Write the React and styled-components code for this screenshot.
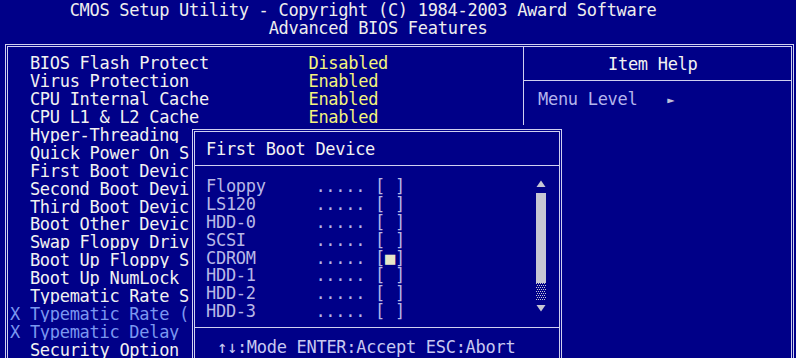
import React from "react";
import styled, { createGlobalStyle } from "styled-components";

const CW = 9.95; // character cell width
const LH = 17.9; // character cell height

const GlobalStyle = createGlobalStyle`
  html, body { margin: 0; padding: 0; background: #000088; }
  body { overflow: hidden; }
`;

const Screen = styled.div`
  position: relative;
  width: 796px;
  height: 358px;
  overflow: hidden;
  background: #000088;
  font-family: "DejaVu Sans Mono", "Liberation Mono", monospace;
  font-size: 17px;
  letter-spacing: -0.29px;
  line-height: 21px;
  color: #eeeeee;
`;

const Header = styled.header`
  display: flex;
  flex-direction: column;
`;

const TextLine = styled.div`
  height: ${LH}px;
  white-space: pre;
  padding-left: ${(p) => (p.$col || 0) * CW}px;
  color: ${(p) => p.$color || "#eeeeee"};
`;

const Frame = styled.div`
  box-sizing: border-box;
  margin: 8px 0 0 5px;
  width: 789px;
  height: 420px;
  border: 3px double #d0d0f0;
  border-bottom: none;
  display: flex;
`;

const LeftPanel = styled.section`
  width: 515px;
  padding-top: 6.7px;
  display: flex;
  flex-direction: column;
`;

const SettingRow = styled.div`
  display: flex;
  height: ${LH}px;
  white-space: pre;
  padding-left: 2px;
`;

const Marker = styled.span`
  width: ${2 * CW}px;
  color: #7b97f0;
`;

const Label = styled.span`
  width: ${28 * CW}px;
  overflow: hidden;
  color: ${(p) => (p.$disabled ? "#7b97f0" : "#f2f2f2")};
`;

const Value = styled.span`
  color: ${(p) => (p.$disabled ? "#7b97f0" : "#f4f47c")};
`;

const RightPanel = styled.aside`
  flex: 1;
  border-left: 1px solid #d0d0f0;
  display: flex;
  flex-direction: column;
`;

const HelpHeader = styled.div`
  padding: 7px 0 8.1px 84px;
  border-bottom: 1px solid #d0d0f0;
  height: ${LH}px;
  color: #f2f2f2;
  white-space: pre;
`;

const HelpLine = styled.div`
  padding: 8.5px 0 0 14px;
  height: ${LH}px;
  color: #b4b4ec;
  white-space: pre;
`;

const Pointer = styled.span`
  font-size: 12px;
  color: #c0c0d8;
  vertical-align: 1px;
`;

/* the popup occupies whole character cells; its box is drawn inside them */
const PopupCell = styled.div`
  position: absolute;
  left: 189px;
  top: 125px;
  padding: 4px 2px 0 3px;
  background: #000088;
`;

const Popup = styled.div`
  width: 370px;
  height: 260px;
  box-sizing: border-box;
  border: 3px double #d0d0f0;
  border-bottom: none;
  display: flex;
  flex-direction: column;
`;

const PopupTitle = styled.div`
  padding: 7px 0 8.1px 11px;
  height: ${LH}px;
  border-bottom: 1px solid #d0d0f0;
  color: #f2f2f2;
  white-space: pre;
`;

const PopupBody = styled.div`
  display: flex;
  padding: 10px 12px 7.7px 11px;
  border-bottom: 1px solid #d0d0f0;
`;

const OptionList = styled.div`
  flex: 1;
  display: flex;
  flex-direction: column;
`;

const OptionRow = styled.div`
  height: ${LH}px;
  white-space: pre;
  color: #b8b8e6;
`;

const Mark = styled.span`
  color: #e6e6c8;
`;

const PopupFooter = styled.div`
  padding: 9px 0 0 22px;
  height: ${LH}px;
  color: #c8c8f0;
  white-space: pre;
`;

const settings = [
  { label: "BIOS Flash Protect", value: "Disabled" },
  { label: "Virus Protection", value: "Enabled" },
  { label: "CPU Internal Cache", value: "Enabled" },
  { label: "CPU L1 & L2 Cache", value: "Enabled" },
  { label: "Hyper-Threading Technology", value: "Enabled" },
  { label: "Quick Power On Self Test", value: "Enabled" },
  { label: "First Boot Device", value: "CDROM" },
  { label: "Second Boot Device", value: "HDD-0" },
  { label: "Third Boot Device", value: "Floppy" },
  { label: "Boot Other Device", value: "Enabled" },
  { label: "Swap Floppy Drive", value: "Disabled" },
  { label: "Boot Up Floppy Seek", value: "Enabled" },
  { label: "Boot Up NumLock Status", value: "On" },
  { label: "Typematic Rate Setting", value: "Disabled" },
  { label: "Typematic Rate (Chars/Sec)", value: "6", disabled: true },
  { label: "Typematic Delay (Msec)", value: "250", disabled: true },
  { label: "Security Option", value: "Setup" },
];

const options = ["Floppy", "LS120", "HDD-0", "SCSI", "CDROM", "HDD-1", "HDD-2", "HDD-3"];
const selected = "CDROM";

function ScrollBar() {
  const dots = [];
  for (let y = 0; y < 17; y += 2) {
    for (let x = 0; x < 10; x += 2) {
      dots.push(<rect key={`${x}-${y}`} x={1 + x + ((y / 2) % 2)} y={107 + y} width="1" height="1" />);
    }
  }
  return (
    <svg width="12" height="143" viewBox="0 0 12 143" style={{ display: "block" }}>
      <g fill="#c6c6d4">
        <polygon points="6,4.5 10.5,11 1.5,11" />
        <rect x="1" y="17" width="10" height="90" />
        {dots}
        <polygon points="1.5,129 10.5,129 6,135.5" />
      </g>
    </svg>
  );
}

export default function App() {
  return (
    <>
      <GlobalStyle />
      <Screen>
        <Header>
          <TextLine $col={7}>CMOS Setup Utility - Copyright (C) 1984-2003 Award Software</TextLine>
          <TextLine $col={27}>Advanced BIOS Features</TextLine>
        </Header>
        <Frame>
          <LeftPanel>
            {settings.map((s) => (
              <SettingRow key={s.label}>
                <Marker>{s.disabled ? "X" : " "}</Marker>
                <Label $disabled={s.disabled}>{s.label}</Label>
                <Value $disabled={s.disabled}>{s.value}</Value>
              </SettingRow>
            ))}
          </LeftPanel>
          <RightPanel>
            <HelpHeader>Item Help</HelpHeader>
            <HelpLine>
              {"Menu Level   "}
              <Pointer>►</Pointer>
            </HelpLine>
          </RightPanel>
        </Frame>
        <PopupCell>
          <Popup>
            <PopupTitle>First Boot Device</PopupTitle>
            <PopupBody>
              <OptionList>
                {options.map((o) => (
                  <OptionRow key={o}>
                    {o.padEnd(11, " ")}
                    {"..... ["}
                    {o === selected ? <Mark>■</Mark> : " "}
                    {"]"}
                  </OptionRow>
                ))}
              </OptionList>
              <ScrollBar />
            </PopupBody>
            <PopupFooter>↑↓:Mode ENTER:Accept ESC:Abort</PopupFooter>
          </Popup>
        </PopupCell>
      </Screen>
    </>
  );
}
